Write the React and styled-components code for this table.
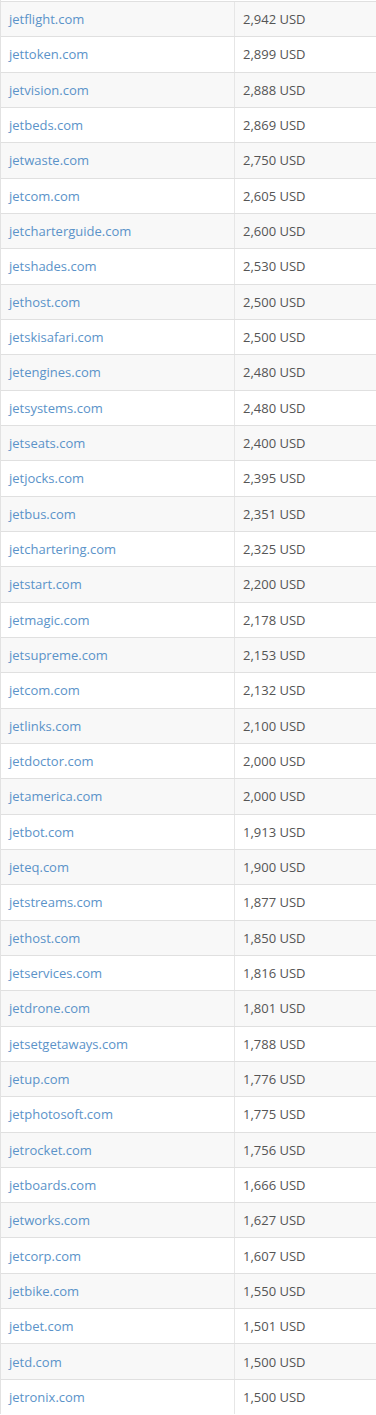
import React from 'react'
import styled, { createGlobalStyle } from 'styled-components'

const GlobalStyle = createGlobalStyle`
  html, body {
    margin: 0;
    padding: 0;
    background: #fff;
  }
  body {
    font-family: "Open Sans", "Liberation Sans", sans-serif;
  }
`

const domains = [
  [ 'jetflight.com', '2,942' ],
  [ 'jettoken.com', '2,899' ],
  [ 'jetvision.com', '2,888' ],
  [ 'jetbeds.com', '2,869' ],
  [ 'jetwaste.com', '2,750' ],
  [ 'jetcom.com', '2,605' ],
  [ 'jetcharterguide.com', '2,600' ],
  [ 'jetshades.com', '2,530' ],
  [ 'jethost.com', '2,500' ],
  [ 'jetskisafari.com', '2,500' ],
  [ 'jetengines.com', '2,480' ],
  [ 'jetsystems.com', '2,480' ],
  [ 'jetseats.com', '2,400' ],
  [ 'jetjocks.com', '2,395' ],
  [ 'jetbus.com', '2,351' ],
  [ 'jetchartering.com', '2,325' ],
  [ 'jetstart.com', '2,200' ],
  [ 'jetmagic.com', '2,178' ],
  [ 'jetsupreme.com', '2,153' ],
  [ 'jetcom.com', '2,132' ],
  [ 'jetlinks.com', '2,100' ],
  [ 'jetdoctor.com', '2,000' ],
  [ 'jetamerica.com', '2,000' ],
  [ 'jetbot.com', '1,913' ],
  [ 'jeteq.com', '1,900' ],
  [ 'jetstreams.com', '1,877' ],
  [ 'jethost.com', '1,850' ],
  [ 'jetservices.com', '1,816' ],
  [ 'jetdrone.com', '1,801' ],
  [ 'jetsetgetaways.com', '1,788' ],
  [ 'jetup.com', '1,776' ],
  [ 'jetphotosoft.com', '1,775' ],
  [ 'jetrocket.com', '1,756' ],
  [ 'jetboards.com', '1,666' ],
  [ 'jetworks.com', '1,627' ],
  [ 'jetcorp.com', '1,607' ],
  [ 'jetbike.com', '1,550' ],
  [ 'jetbet.com', '1,501' ],
  [ 'jetd.com', '1,500' ],
  [ 'jetronix.com', '1,500' ],
]

const Table = styled.div`
  padding-top: 1px;
  border-left: 1px solid #e2e2e2;
`

const Row = styled.div`
  display: grid;
  grid-template-columns: 233px 1fr;
  height: 35.34px;
  box-sizing: border-box;
  border-top: 1px solid #e0e0e0;
  background: ${ props => props.striped ? '#f8f8f8' : '#fff' };
`

const Cell = styled.div`
  display: flex;
  align-items: center;
  padding: 0 8px;
  font-size: 13px;

  & + & {
    border-left: 1px solid #e6e6e6;
  }
`

const DomainLink = styled.a`
  color: #5b93c9;
  text-decoration: none;
`

const Price = styled.span`
  color: #555;
`

function App() {
  return (
    <>
      <GlobalStyle />
      <Table>
        { domains.map( ( [ name, price ], i ) => (
          <Row key={ i } striped={ i % 2 === 0 }>
            <Cell>
              <DomainLink href="#">{ name }</DomainLink>
            </Cell>
            <Cell>
              <Price>{ price } USD</Price>
            </Cell>
          </Row>
        ) ) }
      </Table>
    </>
  )
}

export default App
